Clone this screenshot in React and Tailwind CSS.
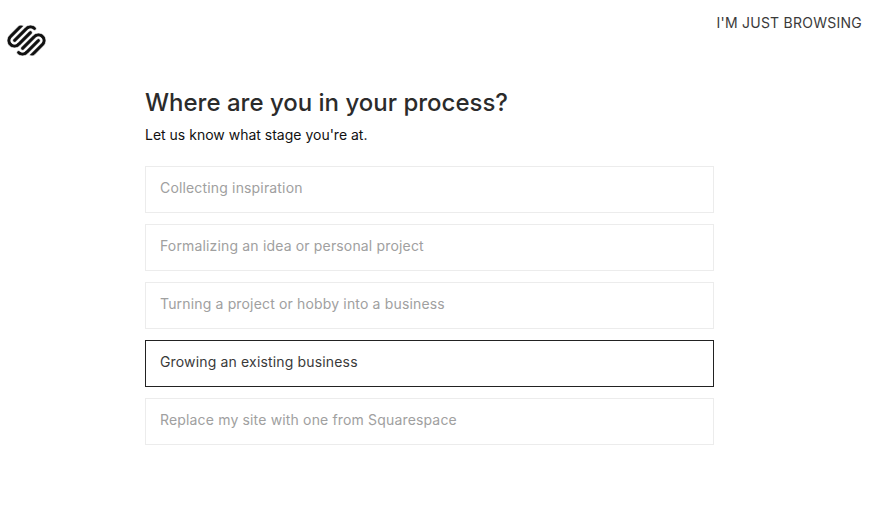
import { SiSquarespace } from 'react-icons/si';

const options = [
  { name: 'Collecting inspiration' },
  { name: 'Formalizing an idea or personal project' },
  { name: 'Turning a project or hobby into a business' },
  { name: 'Growing an existing business', selected: true },
  { name: 'Replace my site with one from Squarespace' },
];

const App = () => {
  return (
    <div className="min-h-screen bg-white font-['Inter','Liberation_Sans',sans-serif]">
      <header className="flex justify-between items-start h-[57px] pl-[7px] pr-[12px]">
        <div className="pt-[21px]">
          <SiSquarespace className="w-[39px] h-[39px] text-[#111] stroke-white stroke-[0.5px]" />
        </div>
        <a className="pt-[14px] text-[14px] leading-[18px] tracking-[0.25px] text-[#3a3a3a]">I'M JUST BROWSING</a>
      </header>

      <main className="ml-[145px] w-[569px] pt-[30px]">
        <h1 className="text-[24px] leading-[32px] font-medium text-[#2b2b2b]">Where are you in your process?</h1>
        <p className="mt-[6px] text-[14px] leading-[20px] text-[#111]">Let us know what stage you're at.</p>
        <div className="mt-[21px] flex flex-col gap-[11px]">
          {options.map((item) => (
            <div
              key={item.name}
              className={`h-[47px] flex items-center px-[14px] pb-[4px] border text-[14px] tracking-[0.16px] ${
                item.selected ? 'border-[#222] text-[#3a3a3a]' : 'border-[#ececec] text-[#a0a0a0]'
              }`}
            >
              {item.name}
            </div>
          ))}
        </div>
      </main>
    </div>
  );
};

export default App;
